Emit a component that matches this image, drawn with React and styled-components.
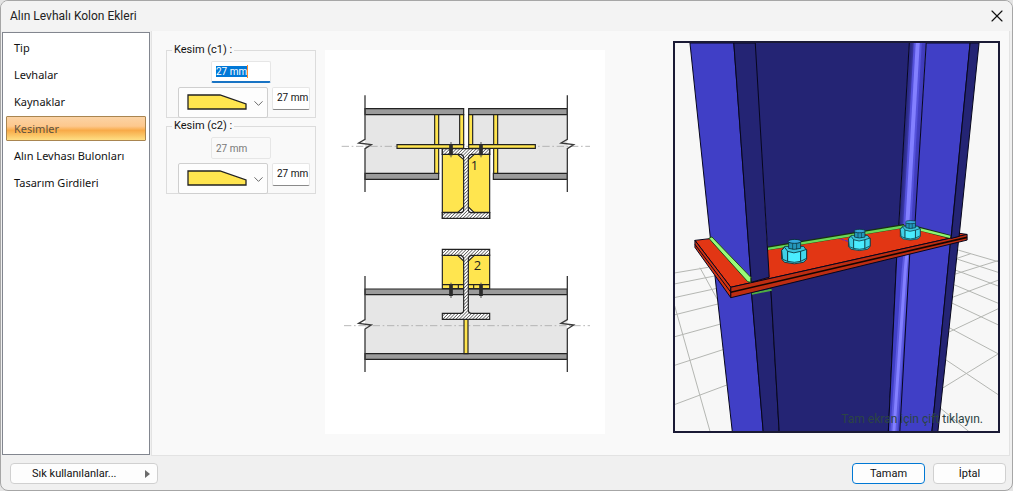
import React, { useEffect, useRef, useState } from "react";
import styled, { createGlobalStyle, css } from "styled-components";
import { ChevronDown, X } from "lucide-react";

const pages = [
	"Tip",
	"Levhalar",
	"Kaynaklar",
	"Kesimler",
	"Alın Levhası Bulonları",
	"Tasarım Girdileri",
];

export default function App() {
	const [page, setPage] = useState("Kesimler");
	return (
		<Dialog>
			<GlobalStyle />
			<TitleBar>
				<Title>Alın Levhalı Kolon Ekleri</Title>
				<CloseButton aria-label="Kapat">
					<X size={20} strokeWidth={1.4} />
				</CloseButton>
			</TitleBar>
			<Body>
				<Sidebar>
					{pages.map((name) => (
						<PageButton
							key={name}
							$active={name === page}
							onClick={() => setPage(name)}
						>
							{name}
						</PageButton>
					))}
				</Sidebar>
				<Content>
					<Groups>
						<CutGroup title="Kesim (c1) :" focused />
						<CutGroup title="Kesim (c2) :" disabled />
					</Groups>
					<DiagramPane>
						<SectionDiagram />
					</DiagramPane>
					<Viewer>
						<ColumnScene />
						<ViewerHint>Tam ekran için çift tıklayın.</ViewerHint>
					</Viewer>
				</Content>
			</Body>
			<Footer>
				<FavouritesButton>
					Sık kullanılanlar...
					<Arrow viewBox="0 0 5 8">
						<path d="M0 0 5 4 0 8z" fill="#6b6b6b" />
					</Arrow>
				</FavouritesButton>
				<Actions>
					<ActionButton $primary>Tamam</ActionButton>
					<ActionButton>İptal</ActionButton>
				</Actions>
			</Footer>
		</Dialog>
	);
}

function CutGroup({ title, focused, disabled }) {
	const input = useRef(null);
	useEffect(() => {
		if (focused) {
			input.current.focus();
			input.current.select();
		}
	}, [focused]);
	return (
		<Fieldset>
			<Legend>{title}</Legend>
			<MainField>
				<MainInput
					ref={input}
					aria-label={title}
					defaultValue="27 mm"
					disabled={disabled}
				/>
				{focused && <Caret />}
			</MainField>
			<ShapeRow>
				<ShapePicker>
					<ShapeSelect aria-label="Kesim tipi">
						<option value="taper" aria-label="Pahlı" />
					</ShapeSelect>
					<ShapeIcon viewBox="0 0 60 16">
						<path
							d="M1 1h32l26 9v5H1z"
							fill="#ffe54f"
							stroke="#222"
							strokeWidth="1.3"
						/>
					</ShapeIcon>
					<PickerArrow size={15} strokeWidth={1.4} />
				</ShapePicker>
				<SmallInput aria-label="Kesim uzunluğu" defaultValue="27 mm" />
			</ShapeRow>
		</Fieldset>
	);
}

function BreakLine({ x, top, mid, bottom }) {
	return (
		<path
			d={`M${x} ${top}V${mid - 14}L${x - 19} ${mid - 3}L${x + 19} ${mid + 2}L${x} ${mid + 14}V${bottom}`}
			fill="none"
			stroke="#3a3a3a"
			strokeWidth="4"
		/>
	);
}

function Bolt({ x, y }) {
	return (
		<g>
			<path d={`M${x} ${y - 6}v46`} stroke="#555" strokeWidth="3" />
			<path d={`M${x} ${y}v34`} stroke="#2b2b2b" strokeWidth="11" />
		</g>
	);
}

// drawn at three units per pixel
function SectionDiagram() {
	const outline = { stroke: "#222", strokeWidth: 3.5 };
	return (
		<Drawing viewBox="0 0 840 1152">
			<defs>
				<pattern
					id="hatch"
					width="7"
					height="7"
					patternUnits="userSpaceOnUse"
					patternTransform="rotate(45)"
				>
					<rect width="7" height="7" fill="#fff" />
					<path d="M1 0v7" stroke="#333" strokeWidth="2" />
				</pattern>
			</defs>
			<g transform="translate(45 90)">
				<path d="M75 103h296v91h-75v86H75z" fill="#e6e6e6" />
				<path d="M386 103h296v177H460v-86h-74z" fill="#e6e6e6" />
				<path
					d="M5 199H750"
					stroke="#aaa"
					strokeWidth="2.5"
					strokeDasharray="22 8 5 8"
				/>
				<g fill="#9b9b9b" {...outline}>
					<path d="M75 86h296v18H75zM75 280h221v18H75z" />
					<path d="M386 86h296v18H386zM460 280h222v18H460z" />
				</g>
				<g fill="#ffe54f" {...outline}>
					<path d="M284 104h12v176h-12zM359 104h12v90h-12z" />
					<path d="M386 104h12v90h-12zM461 104h12v176h-12z" />
					<path d="M171 194h200v11H171zM386 194h200v11H386z" />
					<path d="M307 223h142v174H307z" />
				</g>
				<path
					d="M307 206h142v17h-46l-18 16v142l18 17h46v17H307v-17h46l18-17V239l-18-16h-46z"
					fill="#fff"
					{...outline}
				/>
				<path
					d="M307 206h142v17h-54q-10 2-10 12v153q0 10 10 10h54v17H307v-17h54q10 0 10-10V235q0-10-10-12h-54z"
					fill="url(#hatch)"
					{...outline}
				/>
				<Bolt x={333} y={192} />
				<Bolt x={423} y={192} />
				<BreakLine x={75} top={46} mid={192} bottom={336} />
				<BreakLine x={682} top={46} mid={192} bottom={336} />
				<Mark x="392" y="270">
					1
				</Mark>
			</g>
			<g transform="translate(45 540)">
				<path d="M75 194h607v176H75z" fill="#e6e6e6" />
				<path
					d="M12 287H750"
					stroke="#aaa"
					strokeWidth="2.5"
					strokeDasharray="22 8 5 8"
				/>
				<path
					d="M75 177h607v17H75zM75 371h607v17H75z"
					fill="#9b9b9b"
					{...outline}
				/>
				<path
					d="M307 75h142v101H307zM307 164h142M355 164v12M401 164v12M372 268h12v103h-12z"
					fill="#ffe54f"
					{...outline}
				/>
				<path
					d="M353 76h50l-18 17v20h-14V93z"
					fill="#fff"
					{...outline}
				/>
				<path
					d="M307 58h142v18h-54q-10 2-10 12v152q0 10 10 10h54v18H307v-18h54q10 0 10-10V88q0-10-10-12h-54z"
					fill="url(#hatch)"
					{...outline}
				/>
				<Bolt x={333} y={164} />
				<Bolt x={423} y={164} />
				<BreakLine x={75} top={138} mid={283} bottom={426} />
				<BreakLine x={682} top={138} mid={283} bottom={426} />
				<Mark x="401" y="119">
					2
				</Mark>
			</g>
		</Drawing>
	);
}

function HexNut({ x, y, scale }) {
	return (
		<g
			transform={`translate(${x} ${y}) scale(${scale})`}
			stroke="#06282e"
			strokeWidth="0.8"
		>
			<path d="M0 8 3 4h19l3 4v9l-3 3q-9 3-19 0l-3-3z" fill="#3cc4dc" />
			<path d="M0 8 3 5 6 9v10l-5-2z" fill="#3fd0e6" />
			<path d="M6 9q6 3 13 0v10q-6 2-13 0z" fill="#4aecff" />
			<path d="M19 9l6-2v9l-6 3z" fill="#42d8ee" />
			<path d="M7 0v6q5 2 12 0V0z" fill="#2496ba" />
			<path d="M11 1v6M15 1v6" strokeWidth="0.6" />
			<ellipse cx="13" cy="-1" rx="6.5" ry="2" fill="#35a8dc" />
		</g>
	);
}

function ColumnScene() {
	const edge = { stroke: "#06061c", strokeWidth: 1 };
	return (
		<Drawing viewBox="675 43 324 389">
			<defs>
				<linearGradient
					id="flute"
					gradientUnits="userSpaceOnUse"
					x1="900"
					y1="235"
					x2="916"
					y2="236"
				>
					<stop offset="0" stopColor="#2a2a86" />
					<stop offset="0.35" stopColor="#4a46c8" />
					<stop offset="1" stopColor="#3c38b8" />
				</linearGradient>
			</defs>
			<rect x="675" y="43" width="324" height="389" fill="#f7f7f7" />
			<g fill="none" stroke="#b4b6b2" strokeWidth="3">
				<path
					transform="translate(670 225) scale(0.3333)"
					d="M14 146 115 129M14 179 135 155M14 220 143 192M14 272 150 238M14 338 155 299M14 424 165 375M14 542 177 481M14 245 121 625M90 130 145 230"
				/>
				<path
					transform="translate(925 225) scale(0.3333)"
					d="M95 75 222 112M92 102 222 144M90 136 222 185M84 179 222 237M80 235 222 302M72 309 222 389M60 404 222 512M40 546 140 628M90 105 140 88M85 152 222 109M78 222 222 168M68 327 222 254M48 497 222 390"
				/>
			</g>

			{/* lower column */}
			<path d="M715 276 751 284 763.5 433H732.5z" fill="#403fc6" {...edge} />
			<path d="M751 284 770 270 779.5 433H763.5z" fill="#242474" {...edge} />
			<path d="M770 270 898 245 889 433H779.5z" fill="#242474" {...edge} />
			<path d="M898 245 915 240 900.5 433H889z" fill="#403fc6" />
			<path
				d="M909 240 906 270 894.5 433"
				fill="none"
				stroke="#5d5ae0"
				strokeWidth="7"
			/>
			<path
				d="M909 240 906 270 894.5 433"
				fill="none"
				stroke="#8380ff"
				strokeWidth="3"
			/>
			<path
				d="M912 240 952 236 932.7 433H900.5L911 245z"
				fill="#403fc6"
				{...edge}
			/>
			<path d="M952 236 960 236 938.7 433H932.7z" fill="#242474" {...edge} />
			<path d="M898 245 889 433" {...edge} />
			<path d="M752 294.5 772 290.5" stroke="#4fae43" strokeWidth="2" />

			{/* end plates */}
			<path
				d="M695 241 712 239 768 250 905 226 968 235 731 288z"
				fill="#e23614"
				{...edge}
			/>
			<path d="M695 241 731 288V298.5L695 248z" fill="#d43312" {...edge} />
			<path d="M695 245 731 293" {...edge} />
			<path d="M731 288 968 235V240.7L731 298.5z" fill="#bd2d12" {...edge} />
			<path d="M731 293 968 238" stroke="#140502" strokeWidth="1.6" />
			<path d="M838 238.5 850 242.5" stroke="#5a20d8" strokeDasharray="3 1" />

			{/* upper column */}
			<path d="M754 43H910L899.5 228 768 250z" fill="#242474" />
			<path d="M909.5 43H927L916 228 905 226 899.5 227z" fill="url(#flute)" />
			<path d="M918.5 43 908 226" stroke="#5552dc" strokeWidth="8" />
			<path d="M918.5 43 908 226" stroke="#8380ff" strokeWidth="4" />
			<path d="M910 43 899.5 226" {...edge} />
			<path d="M768 249 905 226.5" stroke="#17330f" strokeWidth="4" />
			<path d="M768 249.5 905 227" stroke="#6ad859" strokeWidth="2.5" />
			<path d="M927 43H971L952 237 915.5 228z" fill="#403fc6" {...edge} />
			<path d="M971 43H980L960 237 952 239z" fill="#242474" {...edge} />
			<path d="M915 228 951 237.5" stroke="#17330f" strokeWidth="4" />
			<path d="M915 228.5 951 237.5" stroke="#8cf573" strokeWidth="2.5" />
			<path d="M690 43H734L751.5 283 710.5 239z" fill="#403fc6" {...edge} />
			<path d="M734 43H755.5L769.5 278 751.5 283z" fill="#242474" {...edge} />
			<path
				d="M709 239 712 237.5 751 278V283L748 282.5z"
				fill="#98fb78"
				stroke="#214d17"
			/>

			<HexNut x={782} y={243} scale={1} />
			<HexNut x={849} y={232.5} scale={0.87} />
			<HexNut x={901} y={223.5} scale={0.8} />
		</Drawing>
	);
}

const GlobalStyle = createGlobalStyle`
	* {
		box-sizing: border-box;
	}
	body {
		margin: 0;
		background: #e4e4e4;
		color: #111;
		font-family: Roboto, "Open Sans", sans-serif;
		font-size: 11px;
		line-height: 16px;
	}
	button, input, select {
		font: inherit;
		color: inherit;
		margin: 0;
	}
`;

const Dialog = styled.div`
	min-height: 100vh;
	display: flex;
	flex-direction: column;
	background: #f0f0f0;
	border: 1px solid #a6a6a6;
	border-radius: 8px;
	overflow: hidden;
`;

const TitleBar = styled.header`
	display: flex;
	align-items: center;
	justify-content: space-between;
	height: 30px;
	padding: 0 5px 0 9px;
	background: #f3f3f3;
`;

const Title = styled.h1`
	margin: 0;
	font-size: 12px;
	font-weight: normal;
	color: #222;
`;

const CloseButton = styled.button`
	display: flex;
	padding: 0;
	border: 0;
	background: none;
`;

const Body = styled.div`
	flex: 1;
	display: flex;
	gap: 1px;
	padding: 0 2px 0 1px;
`;

const Sidebar = styled.nav`
	width: 148px;
	display: flex;
	flex-direction: column;
	gap: 2px;
	margin: 1px 0;
	padding: 2px 3px;
	background: #fff;
	border: 1px solid #82868f;
`;

const PageButton = styled.button`
	height: 25px;
	padding: 0 7px;
	font-family: "Noto Sans", sans-serif;
	text-align: left;
	white-space: nowrap;
	border: 1px solid transparent;
	border-radius: 1px;
	background: none;
	${(props) =>
		props.$active &&
		css`
			color: #5e5240;
			border-color: #a98550;
			background: linear-gradient(
				to bottom,
				#fbd3a5 0%,
				#fdc88d 40%,
				#f8aa48 58%,
				#fbc566 80%,
				#ffdf85 100%
			);
		`}
`;

const Content = styled.main`
	flex: 1;
	display: flex;
	align-items: flex-start;
	padding: 10px 9px 20px 14px;
	background: #f9f9f9;
	border: 1px solid #e3e3e3;
	border-top: 0;
`;

const Groups = styled.div`
	width: 150px;
	margin: 1px 9px 0 0;
`;

const Fieldset = styled.fieldset`
	min-width: 0;
	margin: 0;
	padding: 3px 0 0 11px;
	border: 1px solid #dcdcdc;
`;

const Legend = styled.legend`
	margin-left: -6px;
	padding: 0 2px;
`;

const MainField = styled.div`
	position: relative;
	width: 60px;
	margin-left: 33px;
`;

const MainInput = styled.input`
	display: block;
	width: 100%;
	height: 22px;
	padding: 0 4px;
	font-size: 10px;
	background: #fff;
	border: 1px solid #e6e6e6;
	border-radius: 2px;
	outline: none;
	&:focus {
		border-bottom: 2px solid #1873c4;
	}
	&::selection {
		color: #fff;
		background: #0078d7;
	}
	&:disabled {
		color: #777;
		background: #f9f9f9;
	}
`;

const Caret = styled.span`
	position: absolute;
	left: 36px;
	top: 4px;
	width: 1px;
	height: 13px;
	background: #ff8728;
`;

const ShapeRow = styled.div`
	display: flex;
	align-items: flex-start;
	gap: 4px;
	margin: 4px 0 -1px;
`;

const ShapePicker = styled.div`
	position: relative;
	width: 90px;
	height: 31px;
`;

const ShapeSelect = styled.select`
	appearance: none;
	width: 100%;
	height: 100%;
	background: #fdfdfd;
	border: 1px solid #cfcfcf;
	border-radius: 2px;
`;

const ShapeIcon = styled.svg`
	position: absolute;
	left: 9px;
	top: 7px;
	width: 60px;
	height: 16px;
	pointer-events: none;
`;

const PickerArrow = styled(ChevronDown)`
	position: absolute;
	right: 2px;
	top: 9px;
	color: #555;
	pointer-events: none;
`;

const SmallInput = styled.input`
	width: 38px;
	height: 23px;
	padding: 0 0 2px 4px;
	font-size: 10px;
	background: #fff;
	border: 1px solid #e6e6e6;
	border-bottom-color: #8a8a8a;
	border-radius: 2px;
`;

const DiagramPane = styled.div`
	width: 280px;
	margin-top: 9px;
	background: #fff;
`;

const Drawing = styled.svg`
	display: block;
	width: 100%;
`;

const Mark = styled.text`
	font-family: "Open Sans", sans-serif;
	font-size: 39px;
	fill: #222;
`;

const Viewer = styled.div`
	position: relative;
	width: 327px;
	margin-left: auto;
	border: 2px solid #1a1a35;
`;

const ViewerHint = styled.p`
	position: absolute;
	right: 15px;
	bottom: 4px;
	margin: 0;
	font-size: 12px;
	color: #2c4444;
`;

const Footer = styled.footer`
	display: flex;
	align-items: center;
	justify-content: space-between;
	height: 34px;
	padding: 0 6px 0 9px;
`;

const Actions = styled.div`
	display: flex;
	gap: 8px;
`;

const ActionButton = styled.button`
	width: 73px;
	height: 21px;
	padding: 1px 0 0;
	background: #fdfdfd;
	border: 1px solid ${(props) => (props.$primary ? "#0078d4" : "#d0d0d0")};
	border-radius: 4px;
`;

const FavouritesButton = styled(ActionButton)`
	display: flex;
	align-items: center;
	justify-content: space-between;
	width: 148px;
	padding: 1px 7px 0 21px;
`;

const Arrow = styled.svg`
	width: 5px;
	height: 8px;
`;
